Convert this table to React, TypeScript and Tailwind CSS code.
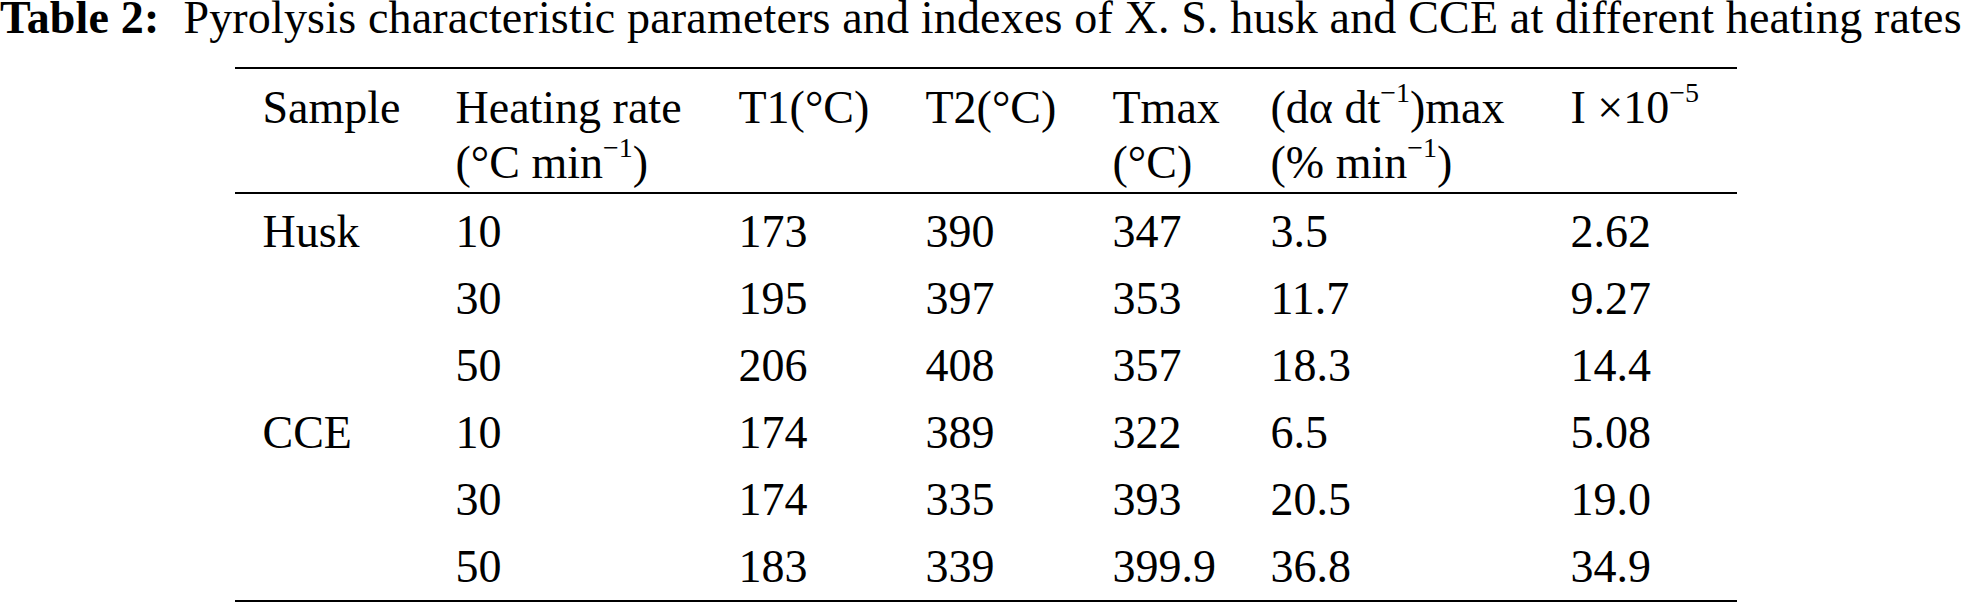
const cols = 'grid grid-cols-[193px_283px_187px_187px_158px_300px_1fr] pl-[28px]';

const rows = [
  ['Husk', '10', '173', '390', '347', '3.5', '2.62'],
  ['', '30', '195', '397', '353', '11.7', '9.27'],
  ['', '50', '206', '408', '357', '18.3', '14.4'],
  ['CCE', '10', '174', '389', '322', '6.5', '5.08'],
  ['', '30', '174', '335', '393', '20.5', '19.0'],
  ['', '50', '183', '339', '399.9', '36.8', '34.9'],
];

function Sup({ children }: { children: React.ReactNode }) {
  return <span className="relative -top-[21px] text-[28px] leading-none">{children}</span>;
}

export default function App() {
  return (
    <div className="w-[1971px] h-[605px] overflow-hidden bg-white text-black font-['Liberation_Serif',serif] text-[46px]">
      {/* caption */}
      <p className="leading-[36px] whitespace-nowrap tracking-[0.17px]">
        <b>Table 2:</b>
        <span className="ml-[24px]">
          Pyrolysis characteristic parameters and indexes of X. S. husk and CCE at different heating rates
        </span>
      </p>

      <div className="w-[1502px] mx-auto mt-[31px]">
        <div className="border-t-2 border-black" />

        {/* header */}
        <div className={`${cols} leading-[55px] pt-[11px] pb-[2px]`}>
          <div>Sample</div>
          <div>
            Heating rate
            <br />
            (°C min<Sup>−1</Sup>)
          </div>
          <div>T1(°C)</div>
          <div>T2(°C)</div>
          <div>
            Tmax
            <br />
            (°C)
          </div>
          <div>
            (dα dt<Sup>−1</Sup>)max
            <br />
            (% min<Sup>−1</Sup>)
          </div>
          <div>
            I ×10<Sup>−5</Sup>
          </div>
        </div>

        <div className="border-t-2 border-black" />

        {/* body */}
        <div className="pt-[4px]">
          {rows.map((r, i) => (
            <div key={i} className={`${cols} leading-[67px]`}>
              {r.map((c, j) => (
                <div key={j}>{c}</div>
              ))}
            </div>
          ))}
        </div>

        <div className="border-t-2 border-black" />
      </div>
    </div>
  );
}
